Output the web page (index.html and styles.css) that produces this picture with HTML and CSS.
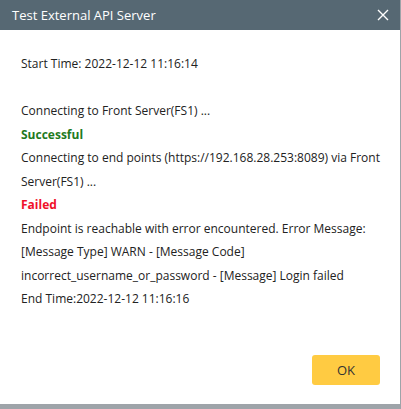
FILE: index.html
```html
<!DOCTYPE html>
<html lang="en">
<head>
  <meta charset="UTF-8" />
  <title>Test External API Server</title>
  <link rel="stylesheet" href="styles.css">
</head>
<body>
  <div class="dialog">
    <div class="dialog-header">
      <span class="dialog-title">Test External API Server</span>
      <button class="close-btn" aria-label="Close">
        <svg width="12" height="12" viewBox="0 0 12 12">
          <path d="M1 1 L11 11 M11 1 L1 11" stroke="#fff" stroke-width="1.4" fill="none" />
        </svg>
      </button>
    </div>

    <div class="dialog-body">
      <div class="line">Start Time: 2022-12-12 11:16:14</div>
      <div class="line blank"></div>
      <div class="line">Connecting to Front Server(FS1) ...</div>
      <div class="line ok">Successful</div>
      <div class="line">Connecting to end points (https://192.168.28.253:8089) via Front Server(FS1) ...</div>
      <div class="line fail">Failed</div>
      <div class="line">Endpoint is reachable with error encountered. Error Message: [Message Type] WARN - [Message Code] incorrect_username_or_password - [Message] Login failed</div>
      <div class="line">End Time:2022-12-12 11:16:16</div>
    </div>

    <div class="dialog-footer">
      <button class="ok-btn">OK</button>
    </div>
  </div>
</body>
</html>
```

FILE: styles.css
```css
body {
  margin: 0;
  background: #9ea4a9;
  font-family: "Open Sans", "Noto Sans", sans-serif;
}

.dialog {
  width: 400px;
  height: 404px;
  background: #fff;
  display: flex;
  flex-direction: column;
}

.dialog-header {
  height: 30px;
  background: #566873;
  display: flex;
  align-items: center;
  justify-content: space-between;
  padding: 0 10px 0 12px;
}

.dialog-title {
  color: #fff;
  font-size: 13px;
}

.close-btn {
  background: none;
  border: none;
  padding: 0;
  width: 14px;
  height: 14px;
  display: flex;
  align-items: center;
  justify-content: center;
}

.dialog-body {
  flex: 1;
  padding: 22px 20px 0 21px;
  font-size: 12px;
  line-height: 23.5px;
  color: #222;
}

.line.blank {
  height: 23.5px;
}

.ok {
  color: #1f7a1f;
  font-weight: bold;
}

.fail {
  color: #f0102a;
  font-weight: bold;
}

.dialog-footer {
  display: flex;
  justify-content: flex-end;
  padding: 0 20px 19px 0;
}

.ok-btn {
  width: 68px;
  height: 30px;
  background: #ffcb42;
  border: none;
  border-radius: 3px;
  font-family: "Open Sans", "Noto Sans", sans-serif;
  font-size: 13px;
  color: #333;
}
```
